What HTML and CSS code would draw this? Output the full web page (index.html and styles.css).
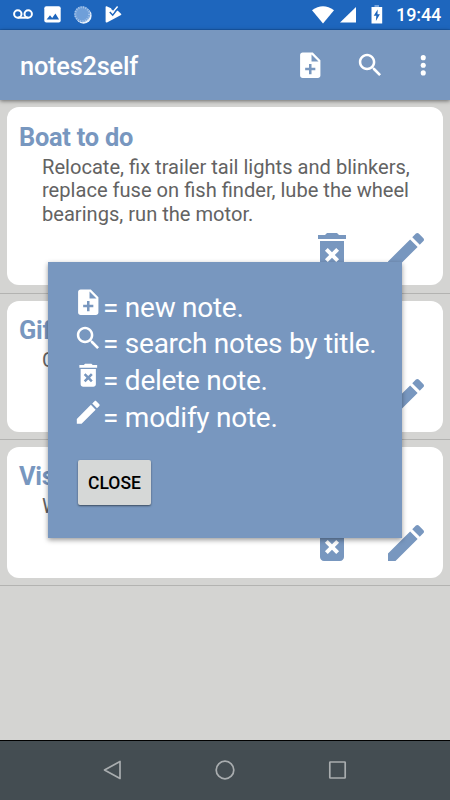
FILE: index.html
```html
<!DOCTYPE html>
<html lang="en">
<head>
<meta charset="utf-8">
<title>notes2self</title>
<link rel="stylesheet" href="styles.css">
</head>
<body>
<svg class="defs" width="0" height="0" aria-hidden="true">
  <symbol id="add" viewBox="0 0 24 24"><path d="M14 2H6c-1.1 0-1.99.9-1.99 2L4 20c0 1.1.89 2 1.99 2H18c1.1 0 2-.9 2-2V8l-6-6zm2 14h-3v3h-2v-3H8v-2h3v-3h2v3h3v2zm-3-7V3.5L18.5 9H13z"/></symbol>
  <symbol id="search" viewBox="0 0 24 24"><path d="M15.5 14h-.79l-.28-.27C15.41 12.59 16 11.11 16 9.5 16 5.91 13.09 3 9.5 3S3 5.91 3 9.5 5.91 16 9.5 16c1.61 0 3.09-.59 4.23-1.57l.27.28v.79l5 4.99L20.49 19l-4.99-5zm-6 0C7.01 14 5 11.99 5 9.5S7.01 5 9.5 5 14 7.01 14 9.5 11.99 14 9.5 14z"/></symbol>
  <symbol id="delete" viewBox="0 0 24 24"><path d="M6 19c0 1.1.9 2 2 2h8c1.1 0 2-.9 2-2V7H6v12zm2.46-7.12l1.41-1.41L12 12.59l2.12-2.12 1.41 1.41L13.41 14l2.12 2.12-1.41 1.41L12 15.41l-2.12 2.12-1.41-1.41L10.59 14l-2.13-2.12zM15.5 4l-1-1h-5l-1 1H5v2h14V4z"/></symbol>
  <symbol id="edit" viewBox="0 0 24 24"><path d="M3 17.25V21h3.75L17.81 9.94l-3.75-3.75L3 17.25zM20.71 7.04c.39-.39.39-1.02 0-1.41l-2.34-2.34c-.39-.39-1.02-.39-1.41 0l-1.83 1.83 3.75 3.75 1.83-1.83z"/></symbol>
  <symbol id="more" viewBox="0 0 24 24"><circle cx="12" cy="6" r="2"/><circle cx="12" cy="12" r="2"/><circle cx="12" cy="18" r="2"/></symbol>
</svg>

<header class="status">
  <div class="status-left">
    <svg width="20" height="11" viewBox="0 0 20 11" fill="none" stroke="#fff" stroke-width="2"><circle cx="4.8" cy="5" r="3.7"/><circle cx="15.2" cy="5" r="3.7"/><path d="M4.8 8.7h10.4"/></svg>
    <svg class="picture" width="17" height="17" viewBox="0 0 17 17"><rect x=".3" y=".2" width="16.4" height="16.4" rx="2" fill="#fff"/><path d="M2.6 13.6 6 9.3l2.2 2.6 3.2-4.3 3.7 6z" fill="#1e66bd"/></svg>
    <svg class="sync" width="18" height="18" viewBox="0 0 18 18"><circle cx="9.6" cy="9.7" r="8" fill="#e9f1fb"/><circle cx="8.2" cy="8.2" r="8" fill="#6f9fd9"/><circle cx="8.2" cy="8.2" r="7" fill="none" stroke="#a9c6ea" stroke-width="2" stroke-dasharray="1 1.4"/></svg>
    <svg class="play" width="17" height="17" viewBox="0 0 17 17"><path d="M.6 1Q.6 0 1.6.2L6 2.3 8 6l4.5-1.500L16 7.7q.8.7 0 1.2L2 16.4q-1.400.3-1.400-.8z" fill="#fff"/><path d="m4.8 6 2.900 3.2 6-7.700" fill="none" stroke="#1e66bd" stroke-width="1.5"/><path d="m6.6 4.300 1.400 1.600L12.600.6" fill="none" stroke="#fff" stroke-width="1.5"/></svg>
  </div>
  <div class="status-right">
    <svg width="22" height="18" viewBox="0 0 22 18"><path d="M0 4.3Q11-4 22 4.3L11 17.5z" fill="#fff"/></svg>
    <svg class="signal" width="16" height="16" viewBox="0 0 16 16"><path d="M0 15.5 16 0v15.5z" fill="#fff"/></svg>
    <svg class="battery" width="12" height="19" viewBox="0 0 12 19"><path d="M3.500 0h4.500v2H3.500z" fill="#78a5dc"/><path d="M.5 2h10.700v16.500H.5z" fill="#fff"/><path d="m6.700 4.500-4 6.200h2.600l-.4 5.200 4-6.700H6.500z" fill="#1e66bd"/></svg>
    <span class="clock">19:44</span>
  </div>
</header>

<div class="appbar">
  <h1>notes2self</h1>
  <svg class="icon act-add"><use href="#add"/></svg>
  <svg class="icon act-search"><use href="#search"/></svg>
  <svg class="icon act-more"><use href="#more"/></svg>
</div>

<main class="list">
  <section class="item">
    <article class="card first">
      <h2>Boat to do</h2>
      <p>Relocate, fix trailer tail lights and blinkers,<br>replace fuse on fish finder, lube the wheel<br>bearings, run the motor.</p>
      <div class="actions"><svg><use href="#delete"/></svg><svg><use href="#edit"/></svg></div>
    </article>
  </section>
  <section class="item">
    <article class="card">
      <h2>Gif</h2>
      <p>C</p>
      <div class="actions"><svg><use href="#delete"/></svg><svg><use href="#edit"/></svg></div>
    </article>
  </section>
  <section class="item">
    <article class="card">
      <h2>Vis</h2>
      <p>W</p>
      <div class="actions"><svg><use href="#delete"/></svg><svg><use href="#edit"/></svg></div>
    </article>
  </section>
</main>

<nav class="navbar">
  <svg viewBox="0 0 20 20"><path d="M17 1.5v17L1.5 10z"/></svg>
  <svg viewBox="0 0 20 20"><circle cx="10" cy="10" r="8.8"/></svg>
  <svg viewBox="0 0 20 20"><rect x="1.8" y="2" width="15.4" height="16" rx=".5"/></svg>
</nav>

<div class="dialog" role="dialog">
  <div class="row"><svg class="icon"><use href="#add"/></svg><span>= new note.</span></div>
  <div class="row"><svg class="icon"><use href="#search"/></svg><span>= search notes by title.</span></div>
  <div class="row"><svg class="icon"><use href="#delete"/></svg><span>= delete note.</span></div>
  <div class="row"><svg class="icon"><use href="#edit"/></svg><span>= modify note.</span></div>
  <button>CLOSE</button>
</div>
</body>
</html>
```
FILE: styles.css
```css
* { box-sizing: border-box; }
body {
  margin: 0;
  width: 450px;
  height: 800px;
  display: flex;
  flex-direction: column;
  overflow: hidden;
  background: #d4d4d2;
  font-family: Roboto, "Liberation Sans", sans-serif;
}
.defs { position: absolute; }
svg { display: block; flex: none; }
h1, h2, p { margin: 0; }
.icon { width: 30.5px; height: 30.5px; fill: #fff; }

.status {
  height: 30px;
  flex: none;
  display: flex;
  justify-content: space-between;
  background: #1e66bd;
  border-bottom: 1px solid #185cae;
}
.status-left, .status-right { display: flex; align-items: center; }
.status-left { padding-left: 12.5px; }
.picture { margin-left: 11.5px; }
.sync { margin-left: 12.5px; }
.play { margin-left: 13px; }
.status-right { padding-right: 9px; }
.signal { margin-left: 6px; }
.battery { margin-left: 15px; }
.clock {
  margin-left: 13px;
  width: 45px;
  color: #fff;
  font-size: 18px;
  font-weight: 500;
  letter-spacing: -.1px;
  line-height: 30px;
  white-space: nowrap;
}

.appbar {
  height: 70px;
  flex: none;
  display: flex;
  align-items: center;
  padding: 0 12px 0 20px;
  background: #7897bf;
  box-shadow: 0 1px 4px rgba(0, 0, 0, .5);
  position: relative;
}
.appbar h1 {
  flex: 1;
  padding-top: 2px;
  color: #fff;
  font-size: 25.4px;
  font-weight: 500;
  letter-spacing: -.22px;
  line-height: 30px;
}
.act-search { margin-left: 29px; }
.act-more { margin-left: 22.5px; }

.list { flex: 1; }
.item { padding: 7px; border-bottom: 1px solid #b3b3b1; }
.card {
  height: 131px;
  padding: 14.5px 12px 0;
  display: flex;
  flex-direction: column;
  background: #fff;
  border-radius: 12px;
}
.card.first { height: 178.4px; margin-bottom: .6px; }
.card h2 {
  color: #7897bf;
  font-size: 25.4px;
  font-weight: 700;
  letter-spacing: -.25px;
  line-height: 30px;
}
.card p {
  padding: 4px 0 0 23px;
  color: #636363;
  font-size: 20.1px;
  line-height: 23.8px;
  white-space: nowrap;
}
.actions {
  display: flex;
  justify-content: flex-end;
  gap: 26px;
  padding-right: 1px;
}
.actions svg { width: 48px; height: 48px; fill: #7897bf; }

.navbar {
  height: 60px;
  flex: none;
  display: flex;
  justify-content: center;
  align-items: center;
  gap: 92.5px;
  padding-bottom: 1px;
  background: #444d52;
  border-top: 1px solid #000;
}
.navbar svg {
  width: 20px;
  height: 20px;
  fill: none;
  stroke: #a9adaf;
  stroke-width: 1.7;
  stroke-linejoin: round;
}

.dialog {
  position: absolute;
  left: 48px;
  top: 262px;
  width: 354px;
  height: 275.5px;
  padding: 24.5px 0 0 24.6px;
  background: #7897bf;
  box-shadow: 0 2px 5px rgba(0, 0, 0, .4);
}
.row {
  height: 36.7px;
  display: flex;
  color: #fff;
  font-size: 28px;
  letter-spacing: -.27px;
  line-height: 37px;
  white-space: nowrap;
}
.row span { padding: 2px 0 0; }
.dialog button {
  display: block;
  width: 73px;
  height: 45px;
  margin: 26.7px 0 0 5.4px;
  padding: 2px 0 0;
  border: 0;
  border-radius: 2px;
  background: #d6d8d7;
  box-shadow: 0 1px 2px rgba(0, 0, 0, .5);
  color: #000;
  font: 500 17.5px Roboto, sans-serif;
}
```
